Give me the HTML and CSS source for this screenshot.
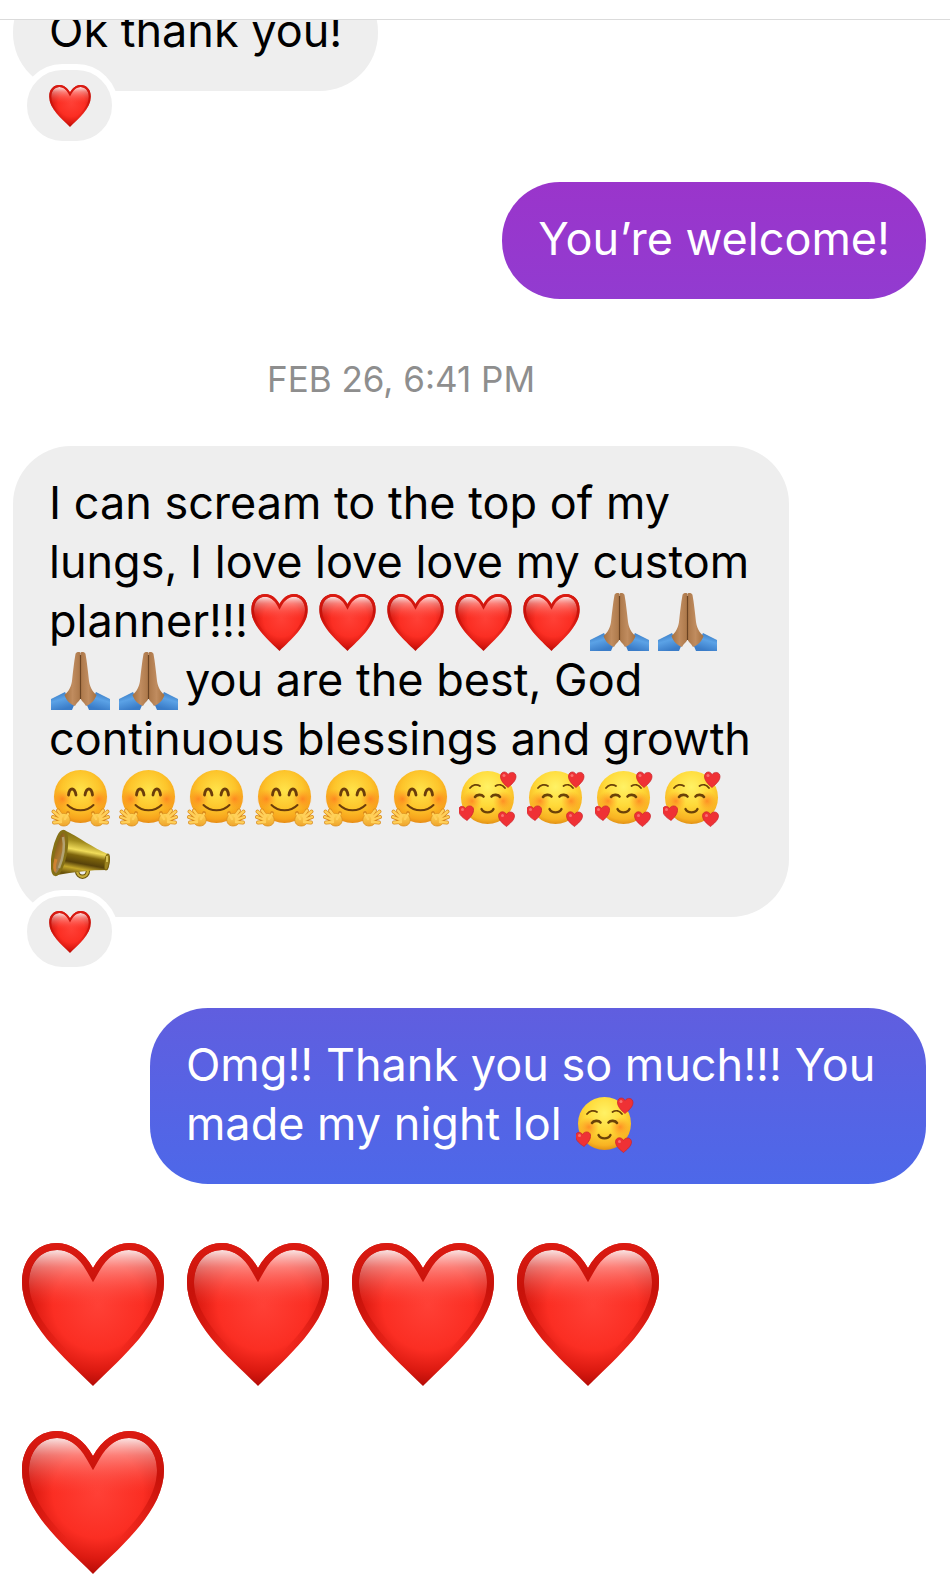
FILE: index.html
```html
<!DOCTYPE html>
<html lang="en">
<head>
<meta charset="utf-8">
<meta name="viewport" content="width=device-width, initial-scale=1">
<title>Messages</title>
<link rel="stylesheet" href="styles.css">
</head>
<body>
<svg class="sprite" aria-hidden="true">
  <defs>
    <radialGradient id="heart-fill" gradientUnits="userSpaceOnUse" cx="76" cy="62" r="82">
      <stop offset="0" stop-color="#ff4036"/>
      <stop offset=".55" stop-color="#fb2e23"/>
      <stop offset=".8" stop-color="#dc1a11"/>
      <stop offset="1" stop-color="#b30b06"/>
    </radialGradient>
    <linearGradient id="heart-rim" gradientUnits="userSpaceOnUse" x1="0" y1="0" x2="0" y2="110">
      <stop offset="0" stop-color="#dc1b12"/>
      <stop offset=".4" stop-color="#c8120a"/>
      <stop offset="1" stop-color="#c8120a" stop-opacity="0"/>
    </linearGradient>
    <linearGradient id="heart-gloss" gradientUnits="userSpaceOnUse" x1="0" y1="8" x2="0" y2="62">
      <stop offset="0" stop-color="#fff" stop-opacity=".85"/>
      <stop offset=".3" stop-color="#ffd0cc" stop-opacity=".5"/>
      <stop offset="1" stop-color="#ff5a50" stop-opacity="0"/>
    </linearGradient>
    <clipPath id="heart-clip"><path d="M71 143C43 115 0 80 0 39C0 16 15 0 35 0C49 0 62 9 71 25C80 9 93 0 107 0C127 0 142 16 142 39C142 80 99 115 71 143Z"/></clipPath>
    <radialGradient id="face-fill" cx=".5" cy=".38" r=".64">
      <stop offset="0" stop-color="#ffe34a"/>
      <stop offset=".55" stop-color="#fdc52b"/>
      <stop offset=".85" stop-color="#f7a41c"/>
      <stop offset="1" stop-color="#e28613"/>
    </radialGradient>
    <radialGradient id="love-fill" cx=".5" cy=".3" r=".72">
      <stop offset="0" stop-color="#fff265"/>
      <stop offset=".5" stop-color="#ffd938"/>
      <stop offset=".85" stop-color="#f8b222"/>
      <stop offset="1" stop-color="#dd8a12"/>
    </radialGradient>
    <radialGradient id="blush">
      <stop offset="0" stop-color="#ff6a1c" stop-opacity=".65"/>
      <stop offset="1" stop-color="#ff8a1c" stop-opacity="0"/>
    </radialGradient>
    <linearGradient id="palm" x1="0" y1="0" x2="0" y2="1">
      <stop offset="0" stop-color="#ffd858"/>
      <stop offset="1" stop-color="#efa42c"/>
    </linearGradient>
    <linearGradient id="skin" x1="0" y1="0" x2="1" y2="0">
      <stop offset="0" stop-color="#a5703f"/>
      <stop offset=".5" stop-color="#c08c5f"/>
      <stop offset="1" stop-color="#ab7749"/>
    </linearGradient>
    <linearGradient id="sleeve" x1="0" y1="0" x2=".4" y2="1">
      <stop offset="0" stop-color="#2f6fb8"/>
      <stop offset=".5" stop-color="#5ba2e6"/>
      <stop offset="1" stop-color="#3a7cc8"/>
    </linearGradient>
    <linearGradient id="brass" gradientUnits="userSpaceOnUse" x1="34" y1="4" x2="26" y2="46">
      <stop offset="0" stop-color="#7a6712"/>
      <stop offset=".22" stop-color="#a28c1e"/>
      <stop offset=".42" stop-color="#f0dc5a"/>
      <stop offset=".55" stop-color="#7d640c"/>
      <stop offset=".72" stop-color="#57420a"/>
      <stop offset=".85" stop-color="#c5a82a"/>
      <stop offset="1" stop-color="#6b540c"/>
    </linearGradient>
    <linearGradient id="horn" x1="0" y1="0" x2="1" y2="1">
      <stop offset="0" stop-color="#6c4d12"/>
      <stop offset=".5" stop-color="#a9762a"/>
      <stop offset="1" stop-color="#8a8a80"/>
    </linearGradient>
  </defs>

  <symbol id="heart" viewBox="0 0 142 143">
    <g clip-path="url(#heart-clip)">
      <path fill="url(#heart-fill)" d="M0 0H142V143H0Z"/>
      <path fill="url(#heart-gloss)" d="M71 35C61 17 49 7 35 7C18 7 7 21 7 40C7 49 8 55 10 62H132C134 55 135 49 135 40C135 21 124 7 107 7C93 7 81 17 71 35Z"/>
      <path fill="none" stroke="url(#heart-rim)" stroke-width="14" d="M71 143C43 115 0 80 0 39C0 16 15 0 35 0C49 0 62 9 71 25C80 9 93 0 107 0C127 0 142 16 142 39C142 80 99 115 71 143Z"/>
    </g>
  </symbol>

  <symbol id="emoji-heart" viewBox="0 0 59 59">
    <use href="#heart" x="1" y="1" width="57" height="57"/>
  </symbol>

  <symbol id="emoji-pray" viewBox="0 0 59 59">
    <g id="pray-half">
      <path fill="url(#sleeve)" d="M0 47L14 40C16 45 20 49 24 51L21 58H0Z"/>
      <path fill="url(#skin)" d="M24.500 2C25 0 28.500 -1 29.500 1V46C29 49 26 50 24 54C19 52 15 48 13.500 43C18 39 20 35 21 29C22 20 23 10 24.500 2Z"/>
    </g>
    <use href="#pray-half" transform="matrix(-1 0 0 1 59 0)"/>
    <path stroke="#6b4322" stroke-width="1.200" d="M29.500 3V47"/>
  </symbol>

  <symbol id="emoji-hug" viewBox="0 0 59 59">
    <circle cx="29.500" cy="26.500" r="26.500" fill="url(#face-fill)"/>
    <circle cx="11.500" cy="29" r="10" fill="url(#blush)"/>
    <circle cx="47.500" cy="29" r="10" fill="url(#blush)"/>
    <g fill="none" stroke="#6b3d0b" stroke-linecap="round">
      <path stroke-width="2.800" d="M17.500 25C18.500 17 23.500 17 25 25M34 25C35.500 17 40.500 17 41.500 25"/>
      <path stroke-width="2" d="M16.500 35C23.500 42 35.500 42 42.500 35"/>
    </g>
    <g id="hug-hand">
      <path fill="none" stroke="#d98a1b" stroke-width="3.800" stroke-linecap="round" d="M9 48L2.500 41.500M10 46L7 40.500M9 50L2 47M9 52L3 52.500M14 49L17 43"/>
      <path fill="url(#palm)" stroke="#dc9020" stroke-width=".8" d="M8 46C11 42 15 43 18 46C21 51 18 56 13 56C9 56 7 54 7 51Z"/>
      <path fill="none" stroke="#ffd05a" stroke-width="2.400" stroke-linecap="round" d="M10 48L2.500 41.500M11 46L7 40.500M10 50L2 47M10 52L3 52.500M14 49L17 44"/>
    </g>
    <use href="#hug-hand" transform="matrix(-1 0 0 1 59 0)"/>
  </symbol>

  <symbol id="emoji-love" viewBox="0 0 59 59">
    <circle cx="28.500" cy="27.500" r="26.500" fill="url(#love-fill)"/>
    <circle cx="13" cy="31" r="10" fill="url(#blush)"/>
    <circle cx="44" cy="31" r="10" fill="url(#blush)"/>
    <g fill="none" stroke="#6b4208" stroke-linecap="round">
      <path stroke-width="1.800" d="M11 18C13.500 14.500 18 14 21 16M36.500 16C39.500 14 43.500 14.500 46 18"/>
      <path stroke-width="2.600" d="M16 27C17.500 24.500 22.500 24 24.500 26.500M32.500 26.500C34.500 24 39.500 24.500 41 27"/>
      <path stroke-width="2.400" d="M22.500 39C24.500 43.500 32.500 43.500 34.500 39"/>
    </g>
    <g fill="#ef3135" stroke="#c9232b" stroke-width=".7">
      <path d="M49 17.500C45 14.500 41 10 41.500 5.500C42.500 1 47.500 1 49 4.500C51.500 1 57 2 57 6.500C57 11 52.500 14.500 49 17.500Z"/>
      <path d="M8 50.500C4 48 -.5 44.500 -.5 40C-.5 36 4.500 35 6.500 38.500C8 35 14 35 14.500 39C15 43 12 47 8 50.500Z"/>
      <path d="M47.500 56.500C43.500 53.500 39.500 50 39.500 45.500C40 41 45.500 40.500 47.500 44.500C49.500 40.500 55.500 41.500 55.500 46C55.500 50 51 53.500 47.500 56.500Z"/>
    </g>
    <g fill="#ff9a94" opacity=".6">
      <circle cx="45" cy="5.500" r="1.500"/><circle cx="3.500" cy="39.500" r="1.500"/><circle cx="43.500" cy="45.500" r="1.500"/>
    </g>
  </symbol>

  <symbol id="emoji-megaphone" viewBox="0 0 59 59">
    <path fill="none" stroke="#6b540c" stroke-width="4.400" d="M26 41C26 50 37 50 37 41"/>
    <path fill="none" stroke="#c8ae3a" stroke-width="2.400" d="M26 41C26 50 37 50 37 41"/>
    <path fill="url(#brass)" d="M13 1C28 8 42 19 57 25C59.500 28 58.500 39 56 41C40 41 22 43 6 46Z"/>
    <ellipse cx="8.500" cy="24" rx="6" ry="22" transform="rotate(11 8.500 24)" fill="url(#horn)" stroke="#857016" stroke-width="3"/>
    <path fill="none" stroke="#d98532" stroke-width="3" opacity=".8" d="M5 30C3 37 3 41 5 42"/>
    <path fill="none" stroke="#b7ac82" stroke-width="2.500" opacity=".8" d="M12 8C14 17 12 29 8 39"/>
    <ellipse cx="56" cy="33" rx="2.200" ry="8" transform="rotate(8 56 33)" fill="#9d8420" stroke="#7b640f" stroke-width="1"/>
    <path fill="none" stroke="#e8d565" stroke-width="1.500" d="M56 27V33"/>
  </symbol>
</svg>

<header class="topbar"></header>
<main class="thread">
  <section class="message received clipped">
    <p class="bubble">Ok thank you!</p>
    <span class="reaction"><svg class="reaction-icon" role="img" aria-label="Heart reaction"><use href="#heart"/></svg></span>
  </section>

  <section class="message sent">
    <p class="bubble purple">You’re welcome!</p>
  </section>

  <time class="stamp">FEB 26, 6:41 PM</time>

  <section class="message received">
    <p class="bubble wide">I can scream to the top of my<br>lungs, I love love love my custom<br>planner!!!<svg class="emoji"><use href="#emoji-heart"/></svg><svg class="emoji"><use href="#emoji-heart"/></svg><svg class="emoji"><use href="#emoji-heart"/></svg><svg class="emoji"><use href="#emoji-heart"/></svg><svg class="emoji"><use href="#emoji-heart"/></svg><svg class="emoji"><use href="#emoji-pray"/></svg><svg class="emoji"><use href="#emoji-pray"/></svg><br><svg class="emoji"><use href="#emoji-pray"/></svg><svg class="emoji"><use href="#emoji-pray"/></svg>you are the best, God<br>continuous blessings and growth<br><svg class="emoji"><use href="#emoji-hug"/></svg><svg class="emoji"><use href="#emoji-hug"/></svg><svg class="emoji"><use href="#emoji-hug"/></svg><svg class="emoji"><use href="#emoji-hug"/></svg><svg class="emoji"><use href="#emoji-hug"/></svg><svg class="emoji"><use href="#emoji-hug"/></svg><svg class="emoji"><use href="#emoji-love"/></svg><svg class="emoji"><use href="#emoji-love"/></svg><svg class="emoji"><use href="#emoji-love"/></svg><svg class="emoji"><use href="#emoji-love"/></svg><br><svg class="emoji"><use href="#emoji-megaphone"/></svg></p>
    <span class="reaction"><svg class="reaction-icon" role="img" aria-label="Heart reaction"><use href="#heart"/></svg></span>
  </section>

  <section class="message sent">
    <p class="bubble blue wide">Omg!! Thank you so much!!! You<br>made my night lol <svg class="emoji"><use href="#emoji-love"/></svg></p>
  </section>

  <section class="hearts" aria-label="Five hearts">
    <svg class="big-heart"><use href="#heart"/></svg>
    <svg class="big-heart"><use href="#heart"/></svg>
    <svg class="big-heart"><use href="#heart"/></svg>
    <svg class="big-heart"><use href="#heart"/></svg>
    <svg class="big-heart"><use href="#heart"/></svg>
  </section>
</main>
</body>
</html>
```
FILE: styles.css
```css
* {
  box-sizing: border-box;
}

body {
  margin: 0;
  background: #fff;
  color: #000;
  font-family: Inter, "Liberation Sans", sans-serif;
  font-size: 45px;
  line-height: 59px;
}

.sprite {
  position: absolute;
  width: 0;
  height: 0;
}

.topbar {
  position: sticky;
  top: 0;
  z-index: 2;
  height: 20px;
  background: #fff;
  border-bottom: 1px solid #dbdbdb;
}

.thread {
  display: flex;
  flex-direction: column;
  padding: 0 24px 8px 13px;
}

.message {
  display: flex;
  flex-direction: column;
}

.received {
  align-items: flex-start;
}

.sent {
  align-items: flex-end;
  margin-top: 41px;
}

.clipped {
  margin-top: -46px;
}

.bubble {
  margin: 0;
  padding: 27px 36px 31px;
  border-radius: 58px;
  background: #eee;
}

.wide {
  width: 85%;
  white-space: nowrap;
}

.purple {
  color: #fff;
  background: linear-gradient(#9a35cb, #923bd0);
}

.blue {
  color: #fff;
  background: linear-gradient(#605edf, #4d68e9);
}

.reaction {
  display: flex;
  align-items: center;
  justify-content: center;
  z-index: 1;
  width: 97px;
  height: 83px;
  margin: -27px 0 -6px 8px;
  border: 6px solid #fff;
  border-radius: 42px;
  background: #eee;
}

.reaction-icon {
  width: 42px;
  height: 42px;
}

.stamp {
  width: 85%;
  margin: 57px 0 43px;
  color: #8e8e8e;
  font-size: 35px;
  line-height: 47px;
  text-align: center;
}

.emoji {
  width: 59px;
  height: 59px;
  margin: 2px 7px -2px 2px;
  vertical-align: top;
}

.hearts {
  display: grid;
  grid-template-columns: repeat(4, 142px);
  gap: 45px 23px;
  margin: 59px 0 0 9px;
}

.big-heart {
  width: 142px;
  height: 143px;
}
```
